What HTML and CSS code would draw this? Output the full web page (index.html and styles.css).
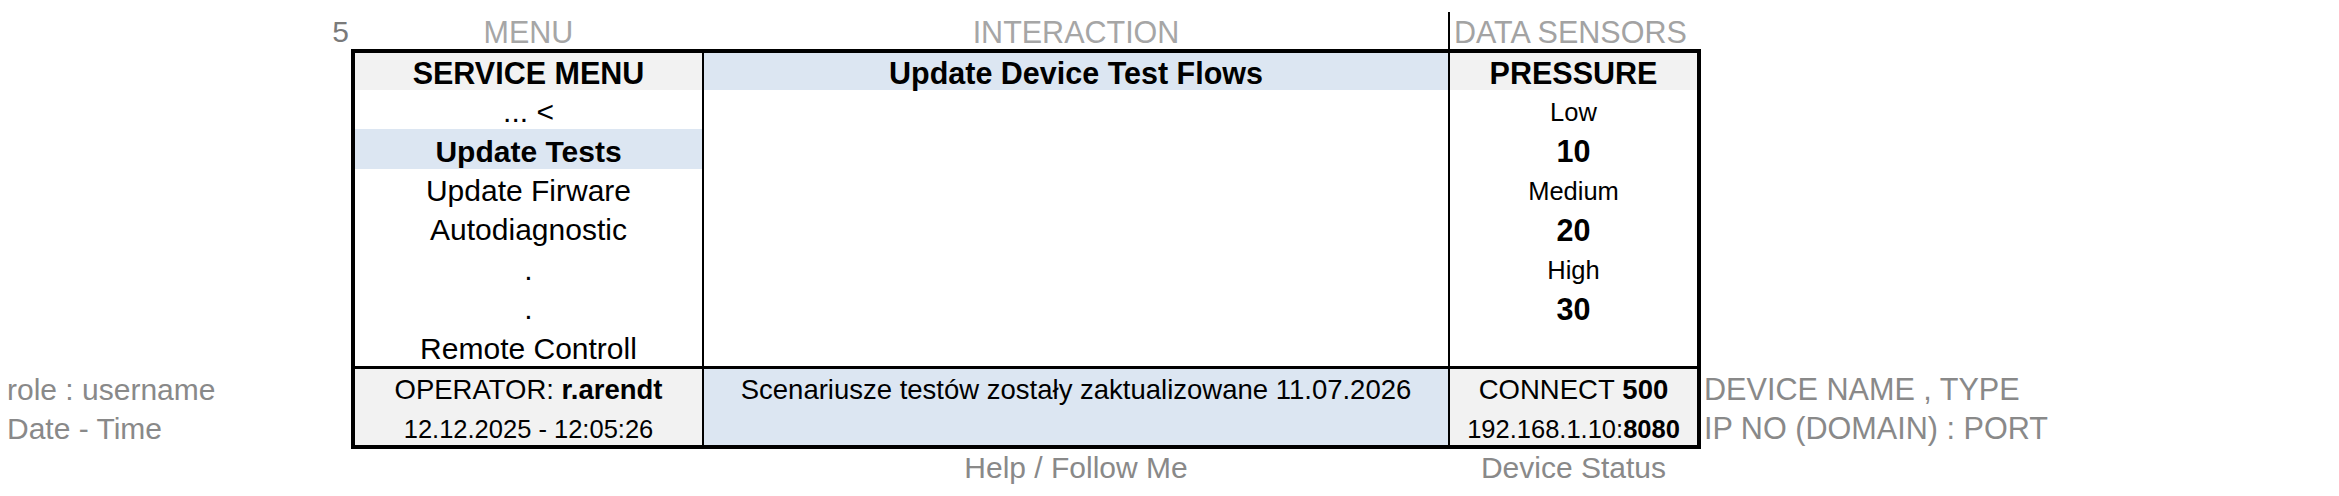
FILE: index.html
```html
<!DOCTYPE html>
<html lang="pl">
<head>
<meta charset="utf-8">
<title>Service Menu</title>
<link rel="stylesheet" href="styles.css">
</head>
<body>
<div class="page">
  <div class="corner"><span class="rownum">5</span></div>
  <div class="heads">
    <div class="head">MENU</div>
    <div class="head">INTERACTION</div>
    <div class="head head-sensors">DATA SENSORS</div>
  </div>
  <div></div>

  <div class="side side-left">
    <div class="side-label">role : username</div>
    <div class="side-label">Date - Time</div>
  </div>

  <div class="panel">
    <div class="col col-menu">
      <div class="cell hd">SERVICE MENU</div>
      <div class="cell">... &lt;</div>
      <div class="cell sel">Update Tests</div>
      <div class="cell">Update Firware</div>
      <div class="cell">Autodiagnostic</div>
      <div class="cell">.</div>
      <div class="cell">.</div>
      <div class="cell">Remote Controll</div>
    </div>
    <div class="col col-inter">
      <div class="cell hd hd-blue">Update Device Test Flows</div>
    </div>
    <div class="col col-sensor">
      <div class="cell hd">PRESSURE</div>
      <div class="cell small">Low</div>
      <div class="cell val">10</div>
      <div class="cell small">Medium</div>
      <div class="cell val">20</div>
      <div class="cell small">High</div>
      <div class="cell val">30</div>
      <div class="cell"></div>
    </div>

    <div class="ft">
      <div class="cell ft-main">OPERATOR:&nbsp;<b>r.arendt</b></div>
      <div class="cell ft-sub">12.12.2025 - 12:05:26</div>
    </div>
    <div class="ft ft-blue">
      <div class="cell ft-main">Scenariusze testów zostały zaktualizowane 11.07.2026</div>
      <div class="cell"></div>
    </div>
    <div class="ft">
      <div class="cell ft-main">CONNECT&nbsp;<b>500</b></div>
      <div class="cell ft-sub">192.168.1.10:<b>8080</b></div>
    </div>
  </div>

  <div class="side side-right">
    <div class="side-label">DEVICE NAME , TYPE</div>
    <div class="side-label">IP NO (DOMAIN) : PORT</div>
  </div>

  <div></div>
  <div class="foots">
    <div></div>
    <div class="foot">Help / Follow Me</div>
    <div class="foot">Device Status</div>
  </div>
  <div></div>
</div>
</body>
</html>
```

FILE: styles.css
```css
html, body {
  margin: 0;
  padding: 0;
  background: #ffffff;
}

body {
  font-family: "Liberation Sans", Arial, sans-serif;
  color: #000;
}

.page {
  display: grid;
  grid-template-columns: 351px 1350px 1fr;
  grid-template-rows: 49px 400px auto;
}

/* top label row */
.corner {
  display: flex;
  justify-content: flex-end;
  align-items: flex-start;
  padding: 15px 2px 0 0;
}

.rownum {
  font-size: 30px;
  line-height: 34px;
  color: #7a7a7a;
}

.heads {
  display: grid;
  grid-template-columns: 347px 744px 247px;
  column-gap: 2px;
  padding: 0 4px;
}

.head {
  padding-top: 15px;
  line-height: 34px;
  font-size: 30.5px;
  color: #a6a6a6;
  text-align: center;
  white-space: nowrap;
}

.head-sensors {
  margin-left: -2px;
  border-left: 2px solid #000;
  margin-top: 12px;
  padding: 3px 0 0 4px;
  font-size: 30.5px;
  color: #a3a3a3;
  text-align: left;
}

/* side labels */
.side {
  display: flex;
  flex-direction: column;
  justify-content: flex-end;
  padding-bottom: 1px;
}

.side-left {
  padding-left: 7px;
}

.side-right {
  padding-left: 3px;
}

.side-label {
  height: 39px;
  line-height: 39px;
  font-size: 30px;
  color: #898989;
  white-space: nowrap;
}

.side-right .side-label {
  font-size: 30.6px;
}

/* main panel */
.panel {
  border: 4px solid #000;
  background: #000;
  display: grid;
  grid-template-columns: 347px 744px 247px;
  grid-template-rows: 313px 76px;
  gap: 3px 2px;
}

.col {
  background: #fff;
  display: grid;
  grid-template-rows: 37px repeat(7, 1fr);
}

.cell {
  display: flex;
  align-items: center;
  justify-content: center;
  white-space: nowrap;
  font-size: 30px;
  line-height: 1;
  padding-top: 5px;
}

.hd {
  background: #f2f2f2;
  font-weight: bold;
  font-size: 30.5px;
  padding-top: 3px;
}

.hd-blue {
  background: #dce6f2;
}

.sel {
  background: #dce6f2;
  font-weight: bold;
}

.small {
  font-size: 25.5px;
  padding-top: 6px;
}

.val {
  font-weight: bold;
  font-size: 30.5px;
}

/* footer */
.ft {
  background: #f2f2f2;
  display: grid;
  grid-template-rows: 1fr 1fr;
}

.ft-blue {
  background: #dce6f2;
}

.ft-main {
  font-size: 27.5px;
  padding-top: 4px;
}

.ft-sub {
  font-size: 25.5px;
  padding-top: 7px;
}

/* bottom labels */
.foots {
  display: grid;
  grid-template-columns: 347px 744px 247px;
  column-gap: 2px;
  padding: 0 4px;
}

.foot {
  padding-top: 1px;
  line-height: 36px;
  font-size: 30px;
  color: #898989;
  text-align: center;
  white-space: nowrap;
}
```
